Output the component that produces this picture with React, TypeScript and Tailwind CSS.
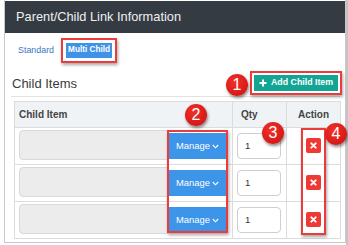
import React from "react";

const rows = [1, 2, 3];

function Badge({ n, className }: { n: string; className: string }) {
    return (
        <div
            className={
                "absolute w-[22px] h-[22px] rounded-full bg-[radial-gradient(circle_at_40%_35%,#f2302a,#c8100f)] shadow-[1px_2px_3px_rgba(0,0,0,0.45)] flex items-center justify-center text-white text-[16px] leading-none " +
                className
            }
        >
            {n}
        </div>
    );
}

function XIcon() {
    return (
        <svg width="7" height="7" viewBox="0 0 8 8">
            <path d="M1.5 1.5 L6.5 6.5 M6.5 1.5 L1.5 6.5" stroke="white" strokeWidth="2.2" strokeLinecap="round" />
        </svg>
    );
}

export default function App() {
    return (
        <div className="relative w-[348px] h-[245px] bg-white flex font-['Liberation_Sans',Arial,sans-serif] overflow-hidden">
            <div className="w-[4px] shrink-0" />
            <div className="w-[342px] h-[243px] border-l border-r border-b border-[#c8c8c8] flex flex-col">
                <div className="h-[32px] mt-[1px] bg-[#353b42] flex items-center pl-[11px] text-[#eef0f2] text-[12.8px]">
                    Parent/Child Link Information
                </div>

                <div className="flex items-center mt-[5px] pl-[13px] h-[25px]">
                    <span className="text-[8.9px] text-[#3a78c2]">Standard</span>
                    <div className="ml-[7px] border-2 border-[#ec3b3b] p-[3px] shadow-[1px_2px_3px_rgba(0,0,0,0.35)]">
                        <div className="w-[46px] h-[15px] bg-[#3f93e6] text-white text-[8.2px] font-bold flex items-center justify-center">
                            Multi Child
                        </div>
                    </div>
                </div>

                <div className="ml-[6px] mr-[5px] mt-[9px] h-[25px] border-b border-[#e2e2e2] flex items-start justify-between">
                    <span className="pl-[1px] mt-[2px] text-[13px] text-[#3a3a3a]">Child Items</span>
                    <div className="-mr-[2px] -mt-[1px] border-2 border-[#ec3b3b] p-[2px] shadow-[1px_2px_3px_rgba(0,0,0,0.35)]">
                        <div className="w-[84px] h-[16px] bg-[#13a594] flex items-center pl-[5px] gap-[4px] text-white text-[8.8px] font-bold">
                            <svg width="8" height="8" viewBox="0 0 8 8">
                                <path d="M4 0.5 V7.5 M0.5 4 H7.5" stroke="white" strokeWidth="2" />
                            </svg>
                            Add Child Item
                        </div>
                    </div>
                </div>

                <div className="ml-[9px] mt-[4px] w-[327px] border-l border-r border-t border-[#dcdcdc]">
                    <div className="grid grid-cols-[218px_54px_53px] h-[26px] bg-[#f0f3f6] border-b border-[#dcdcdc] text-[10px] font-bold text-[#444]">
                        <div className="border-r border-[#dcdcdc] pl-[4px] flex items-center">Child Item</div>
                        <div className="border-r border-[#dcdcdc] pl-[8px] flex items-center">Qty</div>
                        <div className="flex items-center justify-center">Action</div>
                    </div>
                    {rows.map((r) => (
                        <div key={r} className="grid grid-cols-[218px_54px_53px] h-[37px] border-b border-[#dcdcdc]">
                            <div className="border-r border-[#dcdcdc] pl-[4px] flex items-start">
                                <div className="w-[150px] h-[30px] mt-[2px] rounded-l-[4px] bg-[#ececec] border border-[#d8d8d8]" />
                                <div className="w-[57px] h-[26px] mt-[5px] bg-[#3d95ea] flex items-center justify-center gap-[2px] text-white text-[9.4px]">
                                    Manage
                                    <svg width="7" height="5" viewBox="0 0 7 5">
                                        <path d="M0.8 1 L3.5 3.8 L6.2 1" stroke="white" strokeWidth="1.1" fill="none" />
                                    </svg>
                                </div>
                            </div>
                            <div className="border-r border-[#dcdcdc] pl-[4px]">
                                <div className="w-[44px] h-[26px] mt-[5px] rounded-[4px] border border-[#cfcfcf] bg-white flex items-center pl-[7px] text-[9.5px] text-[#333]">
                                    1
                                </div>
                            </div>
                            <div className="pl-[19px]">
                                <div className="w-[15px] h-[15px] mt-[10px] rounded-[2px] bg-[#ee3a35] flex items-center justify-center">
                                    <XIcon />
                                </div>
                            </div>
                        </div>
                    ))}
                </div>
            </div>
            <div className="w-[2px] shrink-0 bg-[#c4c4c4]" />

            <div className="absolute left-[167px] top-[130px] w-[61px] h-[103px] border-2 border-[#ec3b3b] shadow-[1px_2px_3px_rgba(0,0,0,0.35)]" />
            <div className="absolute left-[301px] top-[128px] w-[25px] h-[107px] border-2 border-[#ec3b3b] shadow-[1px_2px_3px_rgba(0,0,0,0.35)]" />

            <Badge n="1" className="left-[226px] top-[74px]" />
            <Badge n="2" className="left-[185px] top-[104px]" />
            <Badge n="3" className="left-[262px] top-[122px]" />
            <Badge n="4" className="left-[325px] top-[123px]" />
        </div>
    );
}
